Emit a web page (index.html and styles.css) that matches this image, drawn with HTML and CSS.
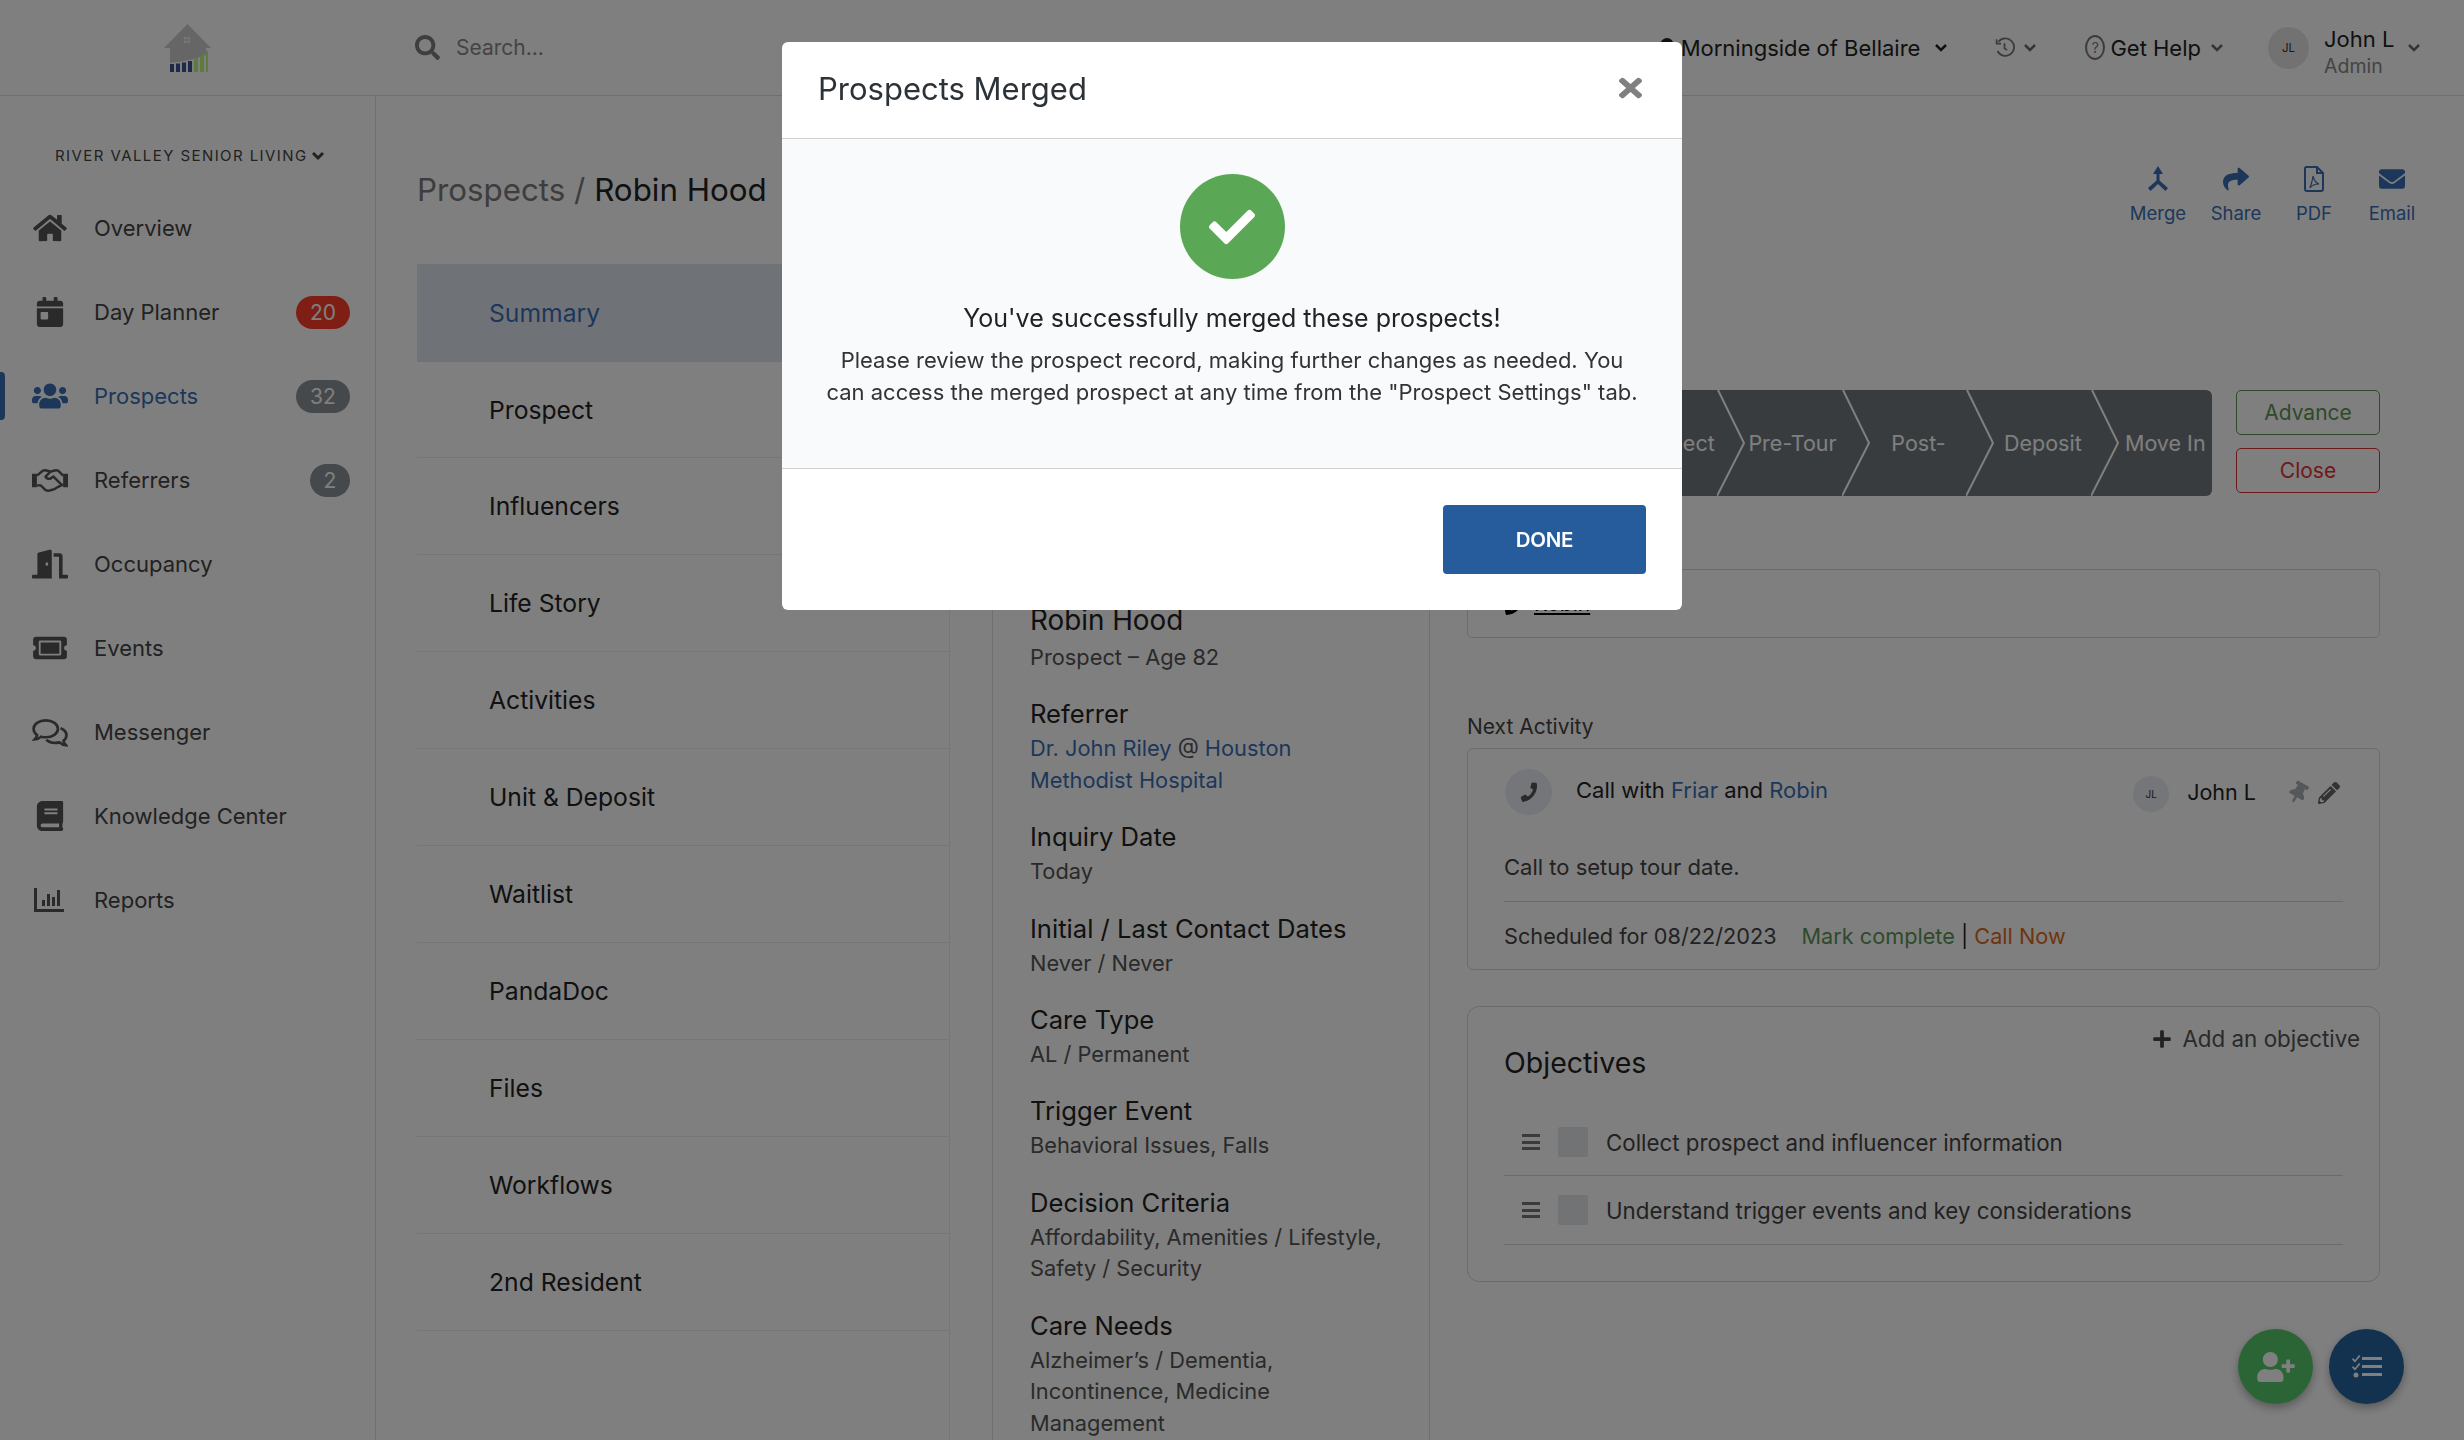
FILE: index.html
```html
<!DOCTYPE html>
<html lang="en">
<head>
<meta charset="utf-8">
<title>Prospects Merged</title>
<link rel="stylesheet" href="styles.css">
</head>
<body>
<div class="app">
  <header class="topbar">
    <div class="logo-cell">
      <svg class="logo" viewBox="0 0 49 48"><path class="logo-house" d="M24.500 0 L48 24 H43 V31 Q28 37 7 39 V24 H1 Z"/><rect class="logo-win" x="21" y="13" width="2.500" height="2.500"/><rect class="logo-win" x="24.500" y="13" width="2.500" height="2.500"/><rect class="logo-win" x="21" y="16.500" width="2.500" height="2.500"/><rect class="logo-win" x="24.500" y="16.500" width="2.500" height="2.500"/><path class="logo-navy" d="M7 40h4v8H7zM13 39.500h4V48h-4zM19 38.500h4V48h-4zM25 37h4v11h-4z"/><path class="logo-green" d="M31 35.500l4-2V48h-4zM37 32.500l4-3V48h-4zM43 28l2-2V48h-2z"/></svg>
    </div>
    <div class="search">
      <svg class="ic-search" viewBox="0 0 512 512"><path d="M505 442.700L405.300 343c-4.500-4.500-10.600-7-17-7H372c27.600-35.300 44-79.700 44-128C416 93.100 322.900 0 208 0S0 93.100 0 208s93.100 208 208 208c48.300 0 92.700-16.400 128-44v16.300c0 6.400 2.500 12.500 7 17l99.700 99.700c9.400 9.400 24.600 9.400 33.900 0l28.300-28.300c9.400-9.400 9.400-24.600.1-34zM208 336c-70.700 0-128-57.200-128-128 0-70.700 57.200-128 128-128 70.700 0 128 57.200 128 128 0 70.700-57.200 128-128 128z"/></svg>
      <span class="search-text">Search...</span>
    </div>
    <div class="top-right">
      <div class="community">
        <svg class="ic-sort" viewBox="0 0 16 24"><path d="M8 0a8 8 0 0 1 8 8c0 4-4 9-8 16-4-7-8-12-8-16a8 8 0 0 1 8-8z"/></svg>
        <span>Morningside of Bellaire</span>
        <svg class="chev chev-dark" viewBox="0 0 14 10"><path d="M2 2l5 5 5-5"/></svg>
      </div>
      <div class="hist">
        <svg class="ic-hist" viewBox="0 0 24 24"><path d="M5 5.500A10 10 0 1 1 4 16"/><path d="M3 2.500v5h5"/><path d="M12 7v6l3 2"/></svg>
        <svg class="chev" viewBox="0 0 14 10"><path d="M2 2l5 5 5-5"/></svg>
      </div>
      <div class="help">
        <span class="help-q">?</span>
        <span>Get Help</span>
        <svg class="chev" viewBox="0 0 14 10"><path d="M2 2l5 5 5-5"/></svg>
      </div>
      <div class="user">
        <span class="avatar">JL</span>
        <div class="user-text"><div class="user-name">John L</div><div class="user-role">Admin</div></div>
        <svg class="chev" viewBox="0 0 14 10"><path d="M2 2l5 5 5-5"/></svg>
      </div>
    </div>
  </header>

  <div class="body-row">
    <aside class="sidebar">
      <div class="brand">
        <span>RIVER VALLEY SENIOR LIVING</span>
        <svg class="chev chev-brand" viewBox="0 0 14 10"><path d="M2 2l5 5 5-5"/></svg>
      </div>
      <nav class="nav">
        <a class="nav-item"><svg class="nav-ic" viewBox="0 0 576 512"><path d="M280.370 148.260L96 300.110V464a16 16 0 0 0 16 16l112.060-.29a16 16 0 0 0 15.920-16V368a16 16 0 0 1 16-16h64a16 16 0 0 1 16 16v95.640a16 16 0 0 0 16 16.050L464 480a16 16 0 0 0 16-16V300L295.670 148.260a12.190 12.190 0 0 0-15.300 0zM571.600 251.470L488 182.560V44.050a12 12 0 0 0-12-12h-56a12 12 0 0 0-12 12v72.610L318.470 43a48 48 0 0 0-61 0L4.340 251.470a12 12 0 0 0-1.600 16.900l25.500 31A12 12 0 0 0 45.150 301l235.220-193.740a12.190 12.190 0 0 1 15.300 0L530.900 301a12 12 0 0 0 16.900-1.600l25.500-31a12 12 0 0 0-1.700-16.930z"/></svg><span>Overview</span></a>
        <a class="nav-item"><svg class="nav-ic" viewBox="0 0 448 512"><path d="M0 464c0 26.500 21.500 48 48 48h352c26.500 0 48-21.500 48-48V192H0v272zm64-192c0-8.800 7.200-16 16-16h96c8.800 0 16 7.200 16 16v96c0 8.800-7.200 16-16 16H80c-8.800 0-16-7.200-16-16v-96zM400 64h-48V16c0-8.800-7.200-16-16-16h-32c-8.800 0-16 7.200-16 16v48H160V16c0-8.800-7.200-16-16-16h-32c-8.800 0-16 7.200-16 16v48H48C21.500 64 0 85.500 0 112v48h448v-48c0-26.500-21.500-48-48-48z"/></svg><span>Day Planner</span><b class="badge badge-red">20</b></a>
        <a class="nav-item nav-active"><svg class="nav-ic" viewBox="0 0 640 512"><path d="M96 224c35.300 0 64-28.700 64-64s-28.700-64-64-64-64 28.700-64 64 28.700 64 64 64zm448 0c35.300 0 64-28.700 64-64s-28.700-64-64-64-64 28.700-64 64 28.700 64 64 64zm32 32h-64c-17.600 0-33.500 7.100-45.100 18.600 40.300 22.100 68.900 62 75.100 109.400h66c17.700 0 32-14.300 32-32v-32c0-35.300-28.700-64-64-64zm-256 0c61.900 0 112-50.100 112-112S381.900 32 320 32 208 82.100 208 144s50.100 112 112 112zm76.800 32h-8.300c-20.800 10-43.900 16-68.500 16s-47.600-6-68.500-16h-8.300C179.600 288 128 339.600 128 403.200V432c0 26.500 21.500 48 48 48h288c26.500 0 48-21.500 48-48v-28.800c0-63.600-51.600-115.200-115.200-115.200zm-223.700-13.400C161.500 263.100 145.600 256 128 256H64c-35.300 0-64 28.700-64 64v32c0 17.700 14.300 32 32 32h65.900c6.300-47.400 34.900-87.300 75.200-109.400z"/></svg><span>Prospects</span><b class="badge badge-grey">32</b></a>
        <a class="nav-item"><svg class="nav-ic nav-ic-stroke" viewBox="0 0 37 23"><path class="fill" d="M0 5h5v14H0zM32 5h5v14h-5z"/><path d="M5 7l6-5q2-1 5 0l3 1 3-1q3-1 5 0l5 5M5 17h4l5 5q3 1 5 0l4-1 3-2 6-3M19 3l-5 5q1 3 5 2l3-2 8 8"/></svg><span>Referrers</span><b class="badge badge-grey badge-sm">2</b></a>
        <a class="nav-item"><svg class="nav-ic" viewBox="0 0 640 512"><path d="M624 448h-80V113.450C544 86.190 522.470 64 496 64H384v64h96v384h144c8.840 0 16-7.160 16-16v-32c0-8.840-7.160-16-16-16zM312.240 1.010l-192 49.740C105.990 54.440 96 67.700 96 82.920V448H16c-8.840 0-16 7.160-16 16v32c0 8.840 7.160 16 16 16h336V33.180c0-21.580-19.560-37.410-39.760-32.170zM264 288c-13.250 0-24-14.330-24-32 0-17.670 10.750-32 24-32s24 14.330 24 32c0 17.670-10.750 32-24 32z"/></svg><span>Occupancy</span></a>
        <a class="nav-item"><svg class="nav-ic" viewBox="0 0 576 512"><path d="M128 160h320v192H128V160zm400 96c0 26.510 21.490 48 48 48v96c0 26.510-21.490 48-48 48H48c-26.510 0-48-21.490-48-48v-96c26.510 0 48-21.490 48-48s-21.490-48-48-48v-96c0-26.510 21.490-48 48-48h480c26.510 0 48 21.490 48 48v96c-26.510 0-48 21.490-48 48zm-48-104c0-13.255-10.745-24-24-24H120c-13.255 0-24 10.745-24 24v208c0 13.255 10.745 24 24 24h336c13.255 0 24-10.745 24-24V152z"/></svg><span>Events</span></a>
        <a class="nav-item"><svg class="nav-ic nav-ic-stroke" viewBox="0 0 34 26"><path d="M13 2c6.500 0 11.500 3.500 11.500 8s-5 8-11.500 8c-1.500 0-3-.2-4.300-.6C7 19 4.500 20 2.500 20c1-1 2-2.500 2.300-4C2.800 14.500 1.500 12.400 1.500 10 1.500 5.500 6.500 2 13 2z"/><path d="M27 9.500c3.300 1.300 5.500 3.800 5.500 6.500 0 2.100-1 4-2.800 5.300.3 1.500 1.200 3 2.300 4.200-2.300-.1-4.500-1.200-6-2.700-1.200.3-2.500.5-4 .5-3.500 0-6.500-1.100-8.500-3"/></svg><span>Messenger</span></a>
        <a class="nav-item"><svg class="nav-ic" viewBox="0 0 448 512"><path d="M448 360V24c0-13.300-10.700-24-24-24H96C43 0 0 43 0 96v320c0 53 43 96 96 96h328c13.300 0 24-10.700 24-24v-16c0-7.500-3.500-14.300-8.900-18.700-4.200-15.400-4.200-59.300 0-74.700 5.400-4.300 8.900-11.100 8.900-18.600zM128 134c0-3.300 2.700-6 6-6h212c3.300 0 6 2.700 6 6v20c0 3.300-2.700 6-6 6H134c-3.300 0-6-2.700-6-6v-20zm0 64c0-3.300 2.700-6 6-6h212c3.300 0 6 2.700 6 6v20c0 3.300-2.700 6-6 6H134c-3.300 0-6-2.700-6-6v-20zm253.400 250H96c-17.700 0-32-14.300-32-32 0-17.600 14.400-32 32-32h285.400c-1.900 17.100-1.900 46.900 0 64z"/></svg><span>Knowledge Center</span></a>
        <a class="nav-item"><svg class="nav-ic nav-ic-sm" viewBox="0 0 30 24"><path d="M0 0h3v21h27v3H0zM8 12h3v6H8zM13 6h3v12h-3zM18 9h3v9h-3zM23 2h3v16h-3z"/></svg><span>Reports</span></a>
      </nav>
    </aside>

    <main class="main">
      <div class="title-row">
        <h1 class="crumb"><span class="crumb-a">Prospects</span> <span class="crumb-sep">/</span> <span class="crumb-b">Robin Hood</span></h1>
        <div class="actions">
          <a class="action"><svg class="act-ic" viewBox="0 0 22 26"><path d="M11 0l5 8h-3.500v6.500L21 22l-2.500 3-7.500-7-7.500 7L1 22l8.500-7.500V8H6z"/></svg><span>Merge</span></a>
          <a class="action"><svg class="act-ic" viewBox="0 0 512 512"><path d="M503.691 189.836L327.687 37.851C312.281 24.546 288 35.347 288 56.015v80.053C127.371 137.907 0 170.100 0 322.326c0 61.441 39.581 122.309 83.333 154.132 13.653 9.931 33.111-2.533 28.077-18.631C66.066 312.814 132.917 274.316 288 272.085V360c0 20.700 24.300 31.453 39.687 18.164l176.004-152c11.071-9.562 11.086-26.753 0-36.328z"/></svg><span>Share</span></a>
          <a class="action"><svg class="act-ic act-stroke" viewBox="0 0 20 26"><path d="M2 1h11l6 6v16a2 2 0 0 1-2 2H3a2 2 0 0 1-2-2V2z"/><path d="M13 1v6h6"/><path class="thin" d="M9 10c1 4 3 7 6 8-3 0-7 1-9 4 1-4 3-8 3-12z"/></svg><span>PDF</span></a>
          <a class="action"><svg class="act-ic" viewBox="0 0 512 512"><path d="M502.300 190.800c3.900-3.100 9.700-.2 9.700 4.700V400c0 26.500-21.500 48-48 48H48c-26.500 0-48-21.500-48-48V195.600c0-5 5.700-7.800 9.700-4.700 22.400 17.400 52.100 39.500 154.100 113.600 21.100 15.400 56.700 47.800 92.200 47.600 35.700.3 72-32.800 92.300-47.600 102-74.100 131.600-96.300 154-113.700zM256 320c23.200.4 56.600-29.200 73.400-41.400 132.700-96.300 142.800-104.700 173.400-128.700 5.800-4.500 9.200-11.500 9.200-18.900v-19c0-26.500-21.500-48-48-48H48C21.500 64 0 85.500 0 112v19c0 7.400 3.400 14.300 9.200 18.900 30.600 23.900 40.700 32.400 173.400 128.700 16.800 12.200 50.200 41.800 73.400 41.400z"/></svg><span>Email</span></a>
        </div>
      </div>

      <div class="columns">
        <ul class="tabs">
          <li class="tab tab-active">Summary</li>
          <li class="tab">Prospect</li>
          <li class="tab">Influencers</li>
          <li class="tab">Life Story</li>
          <li class="tab">Activities</li>
          <li class="tab">Unit &amp; Deposit</li>
          <li class="tab">Waitlist</li>
          <li class="tab">PandaDoc</li>
          <li class="tab">Files</li>
          <li class="tab">Workflows</li>
          <li class="tab">2nd Resident</li>
        </ul>

        <section class="profile">
          <div class="profile-photo"></div>
          <h2 class="profile-name">Robin Hood</h2>
          <p class="val val-first">Prospect – Age 82</p>
          <h3 class="lab">Referrer</h3>
          <p class="val"><a class="link">Dr. John Riley</a> @ <a class="link">Houston</a> <a class="link">Methodist Hospital</a></p>
          <h3 class="lab">Inquiry Date</h3>
          <p class="val">Today</p>
          <h3 class="lab">Initial / Last Contact Dates</h3>
          <p class="val">Never / Never</p>
          <h3 class="lab">Care Type</h3>
          <p class="val">AL / Permanent</p>
          <h3 class="lab">Trigger Event</h3>
          <p class="val">Behavioral Issues, Falls</p>
          <h3 class="lab">Decision Criteria</h3>
          <p class="val">Affordability, Amenities / Lifestyle, Safety / Security</p>
          <h3 class="lab">Care Needs</h3>
          <p class="val">Alzheimer’s / Dementia, Incontinence, Medicine Management</p>
        </section>

        <section class="right">
          <div class="stage-row">
            <div class="pipeline">
              <div class="stage stage-wide"><span class="stage-label">Inquiry</span><svg class="stage-chev" viewBox="0 0 28 106"><path d="M1 0l26 53-27 53"/></svg></div>
              <div class="stage"><span class="stage-label stage-right">Prospect</span><svg class="stage-chev" viewBox="0 0 28 106"><path d="M1 0l26 53-27 53"/></svg></div>
              <div class="stage"><span class="stage-label">Pre-Tour</span><svg class="stage-chev" viewBox="0 0 28 106"><path d="M1 0l26 53-27 53"/></svg></div>
              <div class="stage"><span class="stage-label stage-center">Post-</span><svg class="stage-chev" viewBox="0 0 28 106"><path d="M1 0l26 53-27 53"/></svg></div>
              <div class="stage"><span class="stage-label stage-center">Deposit</span><svg class="stage-chev" viewBox="0 0 28 106"><path d="M1 0l26 53-27 53"/></svg></div>
              <div class="stage stage-last"><span class="stage-label stage-center">Move In</span></div>
            </div>
            <div class="stage-btns">
              <button class="btn btn-adv">Advance</button>
              <button class="btn btn-close">Close</button>
            </div>
          </div>

          <div class="note-box">
            <svg class="note-ic" viewBox="0 0 512 512"><path d="M493.400 24.600l-104-24c-11.300-2.600-22.900 3.300-27.500 13.900l-48 112c-4.200 9.800-1.400 21.300 6.900 28l60.600 49.600c-36 76.700-98.900 140.500-177.200 177.200l-49.600-60.600c-6.800-8.300-18.200-11.100-28-6.900l-112 48C3.900 366.500-2 378.100.6 389.400l24 104C27.100 504.200 36.700 512 48 512c256.100 0 464-207.500 464-464 0-11.200-7.700-20.900-18.600-23.400z"/></svg>
            <a class="note-link">Robin</a>
          </div>

          <div class="next-label">Next Activity</div>
          <div class="card activity">
            <div class="act-head">
              <span class="act-circle"><svg class="ic-phone" viewBox="0 0 512 512"><path d="M493.400 24.600l-104-24c-11.300-2.600-22.900 3.300-27.500 13.900l-48 112c-4.200 9.800-1.400 21.300 6.900 28l60.600 49.600c-36 76.700-98.900 140.500-177.200 177.200l-49.600-60.600c-6.800-8.300-18.200-11.100-28-6.900l-112 48C3.900 366.500-2 378.100.6 389.400l24 104C27.100 504.200 36.700 512 48 512c256.100 0 464-207.500 464-464 0-11.200-7.700-20.900-18.600-23.400z"/></svg></span>
              <span class="act-title">Call with <a class="link">Friar</a> and <a class="link">Robin</a></span>
              <span class="act-owner"><span class="mini-avatar">JL</span><span class="owner-name">John L</span></span>
              <svg class="ic-pin" viewBox="0 0 384 512"><path d="M298.028 214.267L285.793 96H328c13.255 0 24-10.745 24-24V24c0-13.255-10.745-24-24-24H56C42.745 0 32 10.745 32 24v48c0 13.255 10.745 24 24 24h42.207L85.972 214.267C37.465 236.820 0 277.261 0 328c0 13.255 10.745 24 24 24h136v104.007c0 1.242.289 2.467.845 3.578l24 48c2.941 5.882 11.364 5.893 14.311 0l24-48a8.008 8.008 0 0 0 .845-3.578V352h136c13.255 0 24-10.745 24-24-.001-51.183-37.983-91.420-85.973-113.733z"/></svg>
              <svg class="ic-pencil" viewBox="0 0 512 512"><path d="M497.900 142.100l-46.100 46.100c-4.700 4.700-12.300 4.700-17 0l-111-111c-4.700-4.700-4.700-12.300 0-17l46.100-46.100c18.700-18.700 49.100-18.700 67.900 0l60.100 60.100c18.800 18.700 18.800 49.100 0 67.900zM284.200 99.800L21.600 362.400.4 483.900c-2.900 16.400 11.400 30.600 27.800 27.800l121.500-21.300 262.600-262.600c4.700-4.700 4.700-12.300 0-17l-111-111c-4.800-4.700-12.400-4.700-17.100 0zM124.100 339.900c-5.500-5.500-5.500-14.300 0-19.800l154-154c5.500-5.500 14.300-5.500 19.800 0s5.500 14.300 0 19.800l-154 154c-5.500 5.500-14.300 5.500-19.800 0zM88 424h48v36.300l-64.500 11.300-31.100-31.100L51.700 376H88v48z"/></svg>
            </div>
            <p class="act-note">Call to setup tour date.</p>
            <div class="act-foot"><span>Scheduled for 08/22/2023</span><span class="act-links"><a class="mark">Mark complete</a> | <a class="callnow">Call Now</a></span></div>
          </div>

          <div class="card objectives">
            <a class="add-obj"><svg class="ic-plus" viewBox="0 0 448 512"><path d="M416 208H272V64c0-17.670-14.330-32-32-32h-32c-17.670 0-32 14.330-32 32v144H32c-17.670 0-32 14.330-32 32v32c0 17.670 14.330 32 32 32h144v144c0 17.670 14.330 32 32 32h32c17.670 0 32-14.330 32-32V304h144c17.670 0 32-14.330 32-32v-32c0-17.670-14.330-32-32-32z"/></svg><span>Add an objective</span></a>
            <h2 class="obj-title">Objectives</h2>
            <div class="obj-rows">
              <div class="obj-row"><span class="handle"></span><span class="checkbox"></span><span>Collect prospect and influencer information</span></div>
              <div class="obj-row"><span class="handle"></span><span class="checkbox"></span><span>Understand trigger events and key considerations</span></div>
            </div>
          </div>
        </section>
      </div>
    </main>
  </div>

  <div class="fabs">
    <a class="fab fab-green"><svg class="fab-ic" viewBox="0 0 640 512"><path d="M624 208h-64v-64c0-8.800-7.200-16-16-16h-32c-8.800 0-16 7.200-16 16v64h-64c-8.800 0-16 7.200-16 16v32c0 8.800 7.200 16 16 16h64v64c0 8.800 7.200 16 16 16h32c8.800 0 16-7.200 16-16v-64h64c8.800 0 16-7.200 16-16v-32c0-8.800-7.200-16-16-16zm-400 48c70.700 0 128-57.300 128-128S294.700 0 224 0 96 57.300 96 128s57.300 128 128 128zm89.600 32h-16.700c-22.200 10.200-46.900 16-72.900 16s-50.600-5.800-72.900-16h-16.700C60.200 288 0 348.200 0 422.400V464c0 26.500 21.500 48 48 48h352c26.500 0 48-21.500 48-48v-41.600c0-74.200-60.200-134.400-134.400-134.400z"/></svg></a>
    <a class="fab fab-blue"><svg class="fab-ic-sm" viewBox="0 0 30 24"><path d="M10 2h20v3H10zM10 10h20v3H10zM10 18h20v3H10z"/><path d="M1 3l2 2 4-5 1.500 1L3 7.500 0 4.500zM1 11l2 2 4-5 1.500 1L3 15.500 0 12.500z"/><circle cx="4" cy="20" r="2.500"/></svg></a>
  </div>
</div>

<div class="overlay"></div>

<div class="modal" role="dialog">
  <div class="modal-head">
    <h2 class="modal-title">Prospects Merged</h2>
    <svg class="modal-x" viewBox="0 0 352 512" preserveAspectRatio="none"><path d="M242.720 256l100.070-100.070c12.280-12.280 12.280-32.190 0-44.480l-22.240-22.240c-12.280-12.280-32.190-12.280-44.480 0L176 189.280 75.930 89.210c-12.280-12.280-32.190-12.280-44.480 0L9.210 111.450c-12.280 12.280-12.280 32.190 0 44.480L109.280 256 9.210 356.070c-12.280 12.280-12.280 32.190 0 44.480l22.240 22.240c12.280 12.280 32.200 12.280 44.480 0L176 322.720l100.070 100.070c12.280 12.280 32.200 12.280 44.480 0l22.240-22.240c12.280-12.280 12.280-32.190 0-44.480L242.720 256z"/></svg>
  </div>
  <div class="modal-body">
    <span class="ok-circle"><svg class="ok-check" viewBox="0 0 512 512"><path d="M173.898 439.404l-166.400-166.400c-9.997-9.997-9.997-26.206 0-36.204l36.203-36.204c9.997-9.998 26.207-9.998 36.204 0L192 312.690 432.095 72.596c9.997-9.997 26.207-9.997 36.204 0l36.203 36.204c9.997 9.997 9.997 26.206 0 36.204l-294.400 294.401c-9.998 9.997-26.207 9.997-36.204-.001z"/></svg></span>
    <h3 class="modal-lead">You've successfully merged these prospects!</h3>
    <p class="modal-text">Please review the prospect record, making further changes as needed. You can access the merged prospect at any time from the "Prospect Settings" tab.</p>
  </div>
  <div class="modal-foot">
    <button class="done">DONE</button>
  </div>
</div>
</body>
</html>
```

FILE: styles.css
```css
* { box-sizing: border-box; }
html, body { margin: 0; padding: 0; height: 100%; overflow: hidden; }
body { font-family: Inter, "Noto Sans", sans-serif; color: #222; background: #fff; font-size: 22px; }
h1, h2, h3, p, ul { margin: 0; padding: 0; font-weight: 400; }
ul { list-style: none; }
svg { display: block; fill: currentColor; flex: none; }
button { font-family: inherit; cursor: pointer; }

.app { height: 1440px; display: flex; flex-direction: column; position: relative; }

/* top bar */
.topbar { height: 96px; border-bottom: 1px solid #dedede; display: flex; align-items: center; flex: none; }
.logo-cell { width: 375px; display: flex; justify-content: center; }
.logo { width: 49px; height: 48px; margin-top: 1px; }
.logo-house { fill: #cdcdcd; }
.logo-win { fill: #f0f0f0; }
.logo-navy { fill: #3c5494; }
.logo-green { fill: #bcf47c; }
.search { margin-left: 40px; display: flex; align-items: center; gap: 16px; color: #8a8a8a; }
.ic-search { width: 25px; height: 25px; color: #7c7c7c; }
.search-text { font-size: 21px; color: #888; }
.top-right { margin-left: auto; display: flex; align-items: center; height: 100%; padding-right: 43px; color: #222; }
.community { display: flex; align-items: center; gap: 14px; position: relative; }
.ic-sort { position: absolute; left: -21px; top: 3px; width: 14px; height: 20px; color: #222; }
.chev { width: 14px; height: 10px; fill: none; stroke: #6a6a6a; stroke-width: 2.500; }
.chev-dark { stroke: #222; }
.hist { display: flex; align-items: center; gap: 8px; margin-left: 46px; }
.ic-hist { width: 21px; height: 23px; fill: none; stroke: #777; stroke-width: 2; }
.help { display: flex; align-items: center; gap: 5px; margin-left: 48px; }
.help .chev { margin-left: 4px; }
.help-q { width: 20px; height: 25px; border: 2px solid #777; border-radius: 50%; font-size: 14px; color: #777; display: flex; align-items: center; justify-content: center; }
.user { display: flex; align-items: center; margin-left: 44px; }
.avatar { width: 41px; height: 42px; border-radius: 50%; background: #e4e4e4; color: #333; font-size: 11.500px; display: flex; align-items: center; justify-content: center; }
.user-text { margin: 8px 0 0 15px; width: 83px; }
.user-name { font-size: 22px; line-height: 28px; color: #222; }
.user-role { font-size: 19.500px; line-height: 26px; color: #888; }

/* shell */
.body-row { flex: 1; display: flex; min-height: 0; }
.sidebar { width: 376px; flex: none; border-right: 1px solid #dedede; }
.brand { height: 90px; padding: 45px 0 0 55px; display: flex; align-items: flex-start; gap: 3px; font-size: 15px; line-height: 30px; letter-spacing: 1.420px; color: #444; }
.chev-brand { margin-top: 10px; stroke: #444; stroke-width: 3; }
.nav-item { height: 84px; display: flex; align-items: center; position: relative; color: #444; font-size: 22px; padding-left: 94px; }
.nav-ic { position: absolute; left: 32px; top: 50%; transform: translateY(-50%); width: 36px; height: 30px; color: #555; }
.nav-ic-sm { left: 34px; width: 30px; height: 24px; }
.nav-ic-stroke { fill: none; stroke: #555; stroke-width: 2.500; }
.nav-ic-stroke .fill { fill: #555; stroke: none; }
.nav-active { color: #3a6fb5; }
.nav-active .nav-ic { color: #3a6fb5; }
.nav-active::before { content: ""; position: absolute; left: 0; top: 18px; width: 5px; height: 48px; border-radius: 0 4px 4px 0; background: #3a6fb5; }
.badge { position: absolute; right: 25px; top: 26px; width: 54px; height: 33px; border-radius: 17px; color: #fff; font-size: 21px; font-weight: 400; display: flex; align-items: center; justify-content: center; }
.badge-red { background: #ff3c28; }
.badge-grey { background: #8c9399; }
.badge-sm { width: 40px; }

/* main */
.main { flex: 1; min-width: 0; padding: 0 33px 0 41px; }
.title-row { height: 168px; padding-top: 68px; display: flex; justify-content: space-between; align-items: flex-start; }
.crumb { font-size: 31.300px; line-height: 52px; }
.crumb-a, .crumb-sep { color: #7a7a7a; }
.crumb-b { color: #222; }
.actions { display: flex; margin-top: 2px; }
.action { width: 78px; display: flex; flex-direction: column; align-items: center; color: #3a6fb5; font-size: 18.500px; line-height: 26px; gap: 8px; }
.act-ic { width: 26px; height: 26px; }
.act-stroke { fill: none; stroke: currentColor; stroke-width: 2; }
.act-stroke .thin { stroke-width: 1.200; }

.columns { display: flex; align-items: flex-start; }
.tabs { width: 533px; height: 1176px; border-right: 1px solid #ececec; flex: none; }
.tab { height: 97px; border-bottom: 1px solid #ececec; padding-left: 72px; display: flex; align-items: center; font-size: 24.700px; color: #222; }
.tab-active { background: #dfe7f0; color: #3a6fb5; border-bottom: 0; height: 98px; }
.tab:nth-child(2) { height: 96px; }

.profile { width: 438px; height: 1176px; margin-left: 42px; flex: none; border: 1px solid #dedede; border-width: 0 1px; padding: 0 45px 0 37px; }
.profile-photo { height: 338px; }
.profile-name { font-size: 27.800px; line-height: 36px; color: #222; }
.lab { font-size: 25.600px; line-height: 36px; color: #222; margin-top: 22.900px; }
.val { font-size: 21.800px; line-height: 31.500px; color: #555; margin-top: 1px; }
.val-first { margin-top: 4px; }
.link { color: #3a6fb5; }

.right { width: 913px; margin-left: 37px; flex: none; padding-top: 126px; }
.stage-row { display: flex; justify-content: space-between; align-items: flex-start; }
.pipeline { width: 745px; height: 106px; background: #72787f; border-radius: 0 6px 6px 0; display: flex; overflow: hidden; color: #fff; }
.stage { position: relative; width: 124.400px; flex: none; padding-right: 27px; display: flex; align-items: center; font-size: 21.500px; }
.stage-wide { width: 154px; }
.stage-last { flex: 1; padding-right: 0; }
.stage-label { display: block; width: 100%; overflow: hidden; white-space: nowrap; padding-left: 3px; }
.stage-right { text-align: right; padding-right: 13px; }
.stage-center { text-align: center; padding-left: 0; }
.stage-chev { position: absolute; right: 0; top: 0; width: 28px; height: 106px; fill: none; stroke: #fff; stroke-width: 2; }
.stage-btns { width: 144px; display: flex; flex-direction: column; gap: 13px; }
.btn { height: 45px; background: transparent; border-radius: 5px; font-size: 21px; padding: 0; }
.btn-adv { border: 1.500px solid #5c9454; color: #5c9454; }
.btn-close { border: 1.500px solid #dc3434; color: #dc3434; }

.note-box { margin-top: 73px; height: 69px; border: 1px solid #d6d6d6; border-radius: 5px; padding: 21px 37px 0; display: flex; align-items: flex-start; gap: 12px; font-size: 21px; }
.note-ic { width: 17px; height: 17px; margin-top: 7px; color: #000; }
.note-link { color: #000; text-decoration: underline; }

.next-label { margin-top: 74px; height: 36px; font-size: 21px; line-height: 30px; color: #444; }
.card { border: 1px solid #d6d6d6; border-radius: 6px; position: relative; }
.activity { height: 222px; padding: 20px 36px 0; }
.act-head { display: flex; align-items: flex-start; height: 46px; padding-left: 1px; }
.act-circle { width: 47px; height: 46px; border-radius: 50%; background: #e8edf2; display: flex; align-items: center; justify-content: center; }
.ic-phone { width: 18px; height: 18px; color: #555; transform: rotate(-8deg); }
.act-title { margin-left: 24px; line-height: 42px; color: #222; }
.act-owner { margin-left: auto; display: flex; align-items: center; margin-top: 7px; }
.mini-avatar { width: 36px; height: 36px; border-radius: 50%; background: #e8edf2; color: #333; font-size: 10px; display: flex; align-items: center; justify-content: center; }
.owner-name { margin: 0 33px 4px 18px; font-size: 21.500px; }
.ic-pin { width: 18px; height: 22px; margin-top: 13px; color: #aab0b6; transform: rotate(30deg); }
.ic-pencil { width: 22px; height: 22px; margin: 13px 3px 0 11px; color: #666; }
.act-note { margin-top: 36px; line-height: 32px; color: #444; padding-bottom: 18px; border-bottom: 1px solid #d6d6d6; }
.act-foot { margin-top: 18px; line-height: 32px; color: #444; display: flex; gap: 25px; font-size: 21.700px; }
.act-links { color: #222; }
.mark { color: #5c9454; }
.callnow { color: #dc6a22; }

.objectives { margin-top: 36px; height: 276px; padding: 36px 36px 0; border-radius: 12px; }
.add-obj { position: absolute; right: 19px; top: 17px; display: flex; align-items: center; gap: 11px; color: #555; line-height: 30px; font-size: 22.400px; }
.ic-plus { width: 18px; height: 20px; color: #444; }
.obj-title { font-size: 28.500px; line-height: 40px; color: #222; }
.obj-rows { margin-top: 24px; }
.obj-row { height: 69px; display: flex; align-items: center; border-bottom: 1px solid #d6d6d6; color: #444; padding-left: 18px; font-size: 22.300px; }
.obj-row:first-child { padding-top: 2px; }
.handle { width: 18px; height: 16px; border-top: 3px solid #777; border-bottom: 3px solid #777; position: relative; flex: none; }
.handle::before { content: ""; position: absolute; left: 0; right: 0; top: 3.500px; height: 3px; background: #777; }
.checkbox { width: 30px; height: 30px; background: #e4e6e9; border-radius: 2px; margin: 0 18px; flex: none; }

.fabs { position: absolute; right: 60px; bottom: 36px; display: flex; gap: 16px; }
.fab { width: 75px; height: 75px; border-radius: 50%; display: flex; align-items: center; justify-content: center; color: #fff; box-shadow: 0 4px 10px rgba(0,0,0,.3); }
.fab-green { background: #56c96a; }
.fab-blue { background: #26649f; }
.fab-ic { width: 38px; height: 30px; }
.fab-ic-sm { width: 30px; height: 24px; }

/* modal */
.overlay { position: fixed; inset: 0; background: rgba(0,0,0,.5); }
.modal { position: fixed; left: 782px; top: 42px; width: 900px; height: 568px; background: #fff; border-radius: 6px; display: flex; flex-direction: column; overflow: hidden; }
.modal-head { height: 97px; border-bottom: 1px solid #d0d0d0; display: flex; align-items: center; justify-content: space-between; padding: 0 40px 4px 36px; flex: none; }
.modal-title { font-size: 31px; color: #2b3238; }
.modal-x { width: 23px; height: 30px; color: #808080; }
.modal-body { height: 330px; background: #f8fafc; border-bottom: 1px solid #d0d0d0; display: flex; flex-direction: column; align-items: center; padding-top: 35px; text-align: center; flex: none; }
.ok-circle { width: 105px; height: 105px; border-radius: 50%; background: #5aa855; display: flex; align-items: center; justify-content: center; flex: none; }
.ok-check { width: 46px; height: 46px; color: #fff; }
.modal-lead { font-size: 25px; line-height: 36px; color: #222; margin-top: 21px; }
.modal-text { font-size: 22px; line-height: 31.500px; color: #333; margin-top: 9px; width: 825px; }
.modal-foot { flex: 1; display: flex; justify-content: flex-end; align-items: flex-start; padding: 36px 36px 0 0; }
.done { width: 203px; height: 69px; background: #265c9c; color: #fff; border: 0; border-radius: 4px; font-size: 20.500px; font-weight: 600; letter-spacing: -.3px; }
```
